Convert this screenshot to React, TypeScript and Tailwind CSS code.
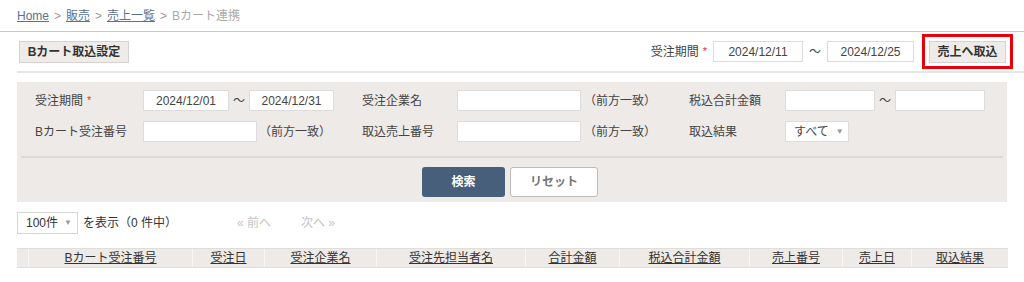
import * as React from 'react';

const FONT = '"Liberation Sans", "Noto Sans CJK JP", sans-serif';

const COLUMNS = [
  { label: '', w: 'w-[11px]' },
  { label: 'Bカート受注番号', w: 'w-[164px]' },
  { label: '受注日', w: 'w-[72px]' },
  { label: '受注企業名', w: 'w-[112px]' },
  { label: '受注先担当者名', w: 'w-[149px]' },
  { label: '合計金額', w: 'w-[94px]' },
  { label: '税込合計金額', w: 'w-[130px]' },
  { label: '売上番号', w: 'w-[93px]' },
  { label: '売上日', w: 'w-[69px]' },
  { label: '取込結果', w: 'w-[97px]' },
];

function TextBox({ w, value }: { w: string; value?: string }) {
  return (
    <div className={`${w} h-[21px] bg-white border border-[#dcdcdc] flex items-center justify-center text-[#444]`}>
      {value}
    </div>
  );
}

function Required() {
  return <span className="text-[#e0302c] ml-[4px] text-[11px]">*</span>;
}

export default function App() {
  return (
    <div className="w-[1024px] h-[282px] bg-white text-[12px] text-[#333] overflow-hidden" style={{ fontFamily: FONT }}>
      {/* breadcrumb */}
      <div className="h-[32px] px-[17px] flex items-center gap-[5px] border-b border-[#c9c9c9] text-[#999]">
        <span className="text-[#5b7190] underline">Home</span>
        <span>&gt;</span>
        <span className="text-[#5b7190] underline">販売</span>
        <span>&gt;</span>
        <span className="text-[#5b7190] underline">売上一覧</span>
        <span>&gt;</span>
        <span className="text-[#aaa]">Bカート連携</span>
      </div>

      {/* toolbar */}
      <div className="h-[39px] flex items-center justify-between pl-[19px] pr-[11px]">
        <button className="h-[22px] w-[110px] bg-[#efebe9] border border-[#d6d2d0] font-bold text-[#333]">
          Bカート取込設定
        </button>
        <div className="flex items-center">
          <span className="text-[#444]">受注期間</span>
          <Required />
          <div className="ml-[6px]">
            <TextBox w="w-[90px]" value="2024/12/11" />
          </div>
          <span className="mx-[6px] text-[#444]">〜</span>
          <TextBox w="w-[87px]" value="2024/12/25" />
          <div className="ml-[8px] border-[3px] border-[#e8000b] px-[4px] h-[35px] flex items-center">
            <button className="h-[22px] w-[77px] bg-[#efebe9] border border-[#d6d2d0] font-bold text-[#333]">
              売上へ取込
            </button>
          </div>
        </div>
      </div>
      <div className="ml-[17px] h-[2px] bg-[#e6e6e6]" />

      {/* search panel */}
      <div className="ml-[17px] mt-[9px] w-[990px] bg-[#eeeae8] pt-[8px] pb-[5px]">
        <div className="grid grid-cols-[108px_219px_95px_232px_96px_1fr] gap-y-[10px] pl-[18px] items-center text-[#444]">
          <div className="flex items-center">受注期間<Required /></div>
          <div className="flex items-center">
            <TextBox w="w-[86px]" value="2024/12/01" />
            <span className="mx-[4px]">〜</span>
            <TextBox w="w-[85px]" value="2024/12/31" />
          </div>
          <div>受注企業名</div>
          <div className="flex items-center">
            <TextBox w="w-[124px]" />
            <span className="ml-[3px]">（前方一致）</span>
          </div>
          <div>税込合計金額</div>
          <div className="flex items-center">
            <TextBox w="w-[90px]" />
            <span className="mx-[4px]">〜</span>
            <TextBox w="w-[90px]" />
          </div>

          <div>Bカート受注番号</div>
          <div className="flex items-center">
            <TextBox w="w-[114px]" />
            <span className="ml-[2px]">（前方一致）</span>
          </div>
          <div>取込売上番号</div>
          <div className="flex items-center">
            <TextBox w="w-[124px]" />
            <span className="ml-[3px]">（前方一致）</span>
          </div>
          <div>取込結果</div>
          <div className="flex items-center">
            <div className="w-[64px] h-[21px] bg-white border border-[#dcdcdc] flex items-center pl-[8px] gap-[7px]">
              <span>すべて</span>
              <span className="text-[#999] text-[8px]">▼</span>
            </div>
          </div>
        </div>

        <div className="mx-[4px] mt-[14px] h-[2px] bg-[#dcdad7]" />

        <div className="flex justify-center gap-[5px] mt-[9px] pr-[4px]">
          <button className="w-[83px] h-[30px] rounded-[3px] bg-[#475f7b] text-white font-bold">検索</button>
          <button className="w-[88px] h-[30px] rounded-[3px] bg-white border border-[#bbb] text-[#777] font-bold">リセット</button>
        </div>
      </div>

      {/* paging */}
      <div className="ml-[17px] mt-[10px] flex items-center">
        <div className="w-[61px] h-[22px] bg-white border border-[#d6d6d6] flex items-center pl-[8px] gap-[6px]">
          <span>100件</span>
          <span className="text-[#999] text-[8px]">▼</span>
        </div>
        <span className="ml-[5px]">を表示（0 件中）</span>
        <span className="ml-[60px] text-[#c4c4c4]">« 前へ</span>
        <span className="ml-[30px] text-[#c4c4c4]">次へ »</span>
      </div>

      {/* table header */}
      <div className="ml-[17px] mt-[14px] w-[991px] h-[20px] flex bg-[#eeeae8] border-y border-[#e0dddb]">
        {COLUMNS.map((c, i) => (
          <div
            key={i}
            className={`${c.w} flex items-center justify-center ${i > 0 ? 'border-l border-[#f8f7f6]' : ''}`}
          >
            {c.label && <span className="underline text-[#333]">{c.label}</span>}
          </div>
        ))}
      </div>
    </div>
  );
}
